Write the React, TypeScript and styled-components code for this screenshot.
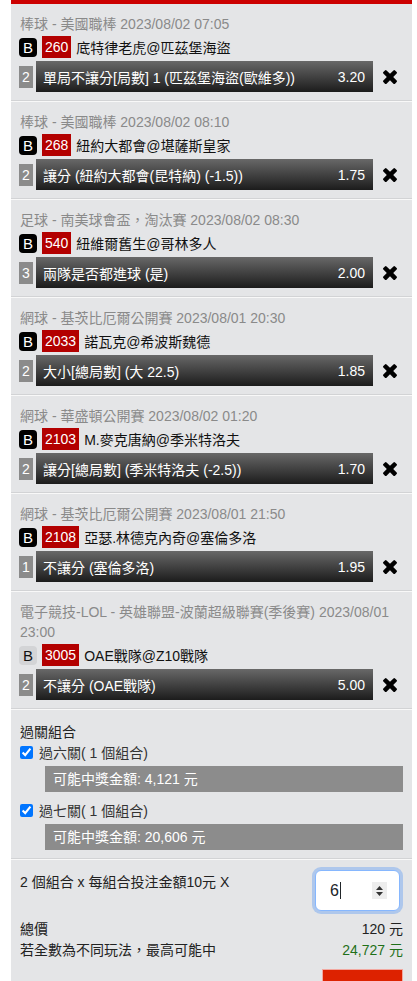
import styled, { createGlobalStyle } from 'styled-components'
import { JSX } from 'react'

// --- Global ---

const GlobalStyle = createGlobalStyle`
  body {
    margin: 0;
    background: #ffffff;
    font-family: 'Liberation Sans', 'Noto Sans CJK TC', sans-serif;
    font-size: 14px;
    color: #222;
  }
`

// --- Styled Components ---

const Slip = styled.div`
  margin-left: 11px;
  width: 401px;
  background-color: #e4e5e7;
  border-top: 4px solid #cc0000;
`

const BetItem = styled.div`
  padding: 10px 9px 8px 8px;
  border-bottom: 1px solid #d2d3d5;

  & + & {
    border-top: 1px solid #f8f8f8;
  }
`

const MatchTitle = styled.div`
  padding-left: 1px;
  color: #8a8a8a;
  line-height: 20px;
`

const MatchRow = styled.div`
  display: flex;
  align-items: center;
  gap: 5px;
  height: 22px;
  margin-top: 2px;
`

const TypeBadge = styled.span<{ $light?: boolean }>`
  display: flex;
  align-items: center;
  justify-content: center;
  width: 18px;
  height: 19px;
  border-radius: 4px;
  font-size: 15px;
  background-color: ${(p) => (p.$light ? '#d3d4d6' : '#000')};
  color: ${(p) => (p.$light ? '#111' : '#fff')};
`

const EventNo = styled.span`
  height: 22px;
  line-height: 22px;
  padding: 0 3px;
  background-color: #b30000;
  color: #fff;
`

const TeamName = styled.span`
  color: #111;
`

const BetRow = styled.div`
  display: flex;
  align-items: center;
  margin-top: 3px;
`

const LegNo = styled.span`
  display: flex;
  align-items: center;
  justify-content: center;
  width: 14px;
  height: 22px;
  background-color: #8b8b8b;
  color: #fff;
`

const BetBar = styled.div`
  display: flex;
  align-items: center;
  justify-content: space-between;
  margin-left: 3px;
  width: 337px;
  height: 31px;
  box-sizing: border-box;
  padding: 0 8px 0 7px;
  background: linear-gradient(#686868, #1c1c1c);
  color: #fff;
`

const RemoveButton = styled.button`
  display: flex;
  align-items: center;
  justify-content: center;
  margin-left: 10px;
  padding: 0;
  width: 14px;
  height: 22px;
  border: none;
  background: none;
  color: #000;
  cursor: pointer;
`

const ComboSection = styled.div`
  padding: 12px 9px 8px 9px;
  border-top: 1px solid #f8f8f8;
  border-bottom: 1px solid #d2d3d5;
`

const SectionTitle = styled.div`
  line-height: 20px;
  color: #222;
`

const ComboRow = styled.label<{ $first?: boolean }>`
  display: flex;
  align-items: center;
  gap: 6px;
  height: 20px;
  margin-top: ${(p) => (p.$first ? '0' : '8px')};
  color: #333;
`

const Check = styled.input`
  margin: 0;
  width: 13px;
  height: 13px;
  accent-color: #0075ff;
`

const PayoutBox = styled.div`
  margin: 4px 0 0 25px;
  height: 26px;
  line-height: 26px;
  padding-left: 8px;
  background-color: #8c8c8c;
  color: #fff;
`

const SummarySection = styled.div`
  padding: 9px 9px 0 9px;
  border-top: 1px solid #f8f8f8;
`

const StakeRow = styled.div`
  display: flex;
  justify-content: space-between;
  align-items: flex-start;
`

const StakeText = styled.div`
  margin-top: 3px;
  line-height: 20px;
  color: #222;
`

const InputBox = styled.div`
  display: flex;
  align-items: center;
  justify-content: space-between;
  box-sizing: border-box;
  width: 85px;
  height: 41px;
  margin: 1px 3px 0 0;
  padding: 0 12px 0 14px;
  background: #fff;
  border: 1px solid #86b7fe;
  border-radius: 6px;
  box-shadow: 0 0 0 3px rgba(13, 110, 253, 0.25);
`

const InputValue = styled.span`
  display: flex;
  align-items: center;
  font-size: 16px;
  color: #212529;
`

const Caret = styled.span`
  display: inline-block;
  width: 1px;
  height: 17px;
  margin-left: 1px;
  background: #212529;
`

const Spinner = styled.span`
  display: flex;
  align-items: center;
  justify-content: center;
  width: 15px;
  height: 17px;
  background: #ededed;
`

const TotalRow = styled.div<{ $first?: boolean }>`
  display: flex;
  justify-content: space-between;
  line-height: 21px;
  margin-top: ${(p) => (p.$first ? '8px' : '0')};
  color: #222;
`

const Amount = styled.span<{ $green?: boolean }>`
  color: ${(p) => (p.$green ? '#1f7019' : '#222')};
`

const SubmitRow = styled.div`
  display: flex;
  justify-content: flex-end;
  margin-top: 8px;
  padding-bottom: 8px;
`

const SubmitButton = styled.button`
  width: 81px;
  height: 30px;
  border: 1px solid #f2a8a0;
  background-color: #dd2200;
  color: #fff;
`

// --- Data ---

interface Bet {
  title: string
  light?: boolean
  no: string
  teams: string
  leg: number
  pick: string
  odds: string
}

const bets: Bet[] = [
  {
    title: '棒球 - 美國職棒 2023/08/02 07:05',
    no: '260',
    teams: '底特律老虎@匹茲堡海盜',
    leg: 2,
    pick: '單局不讓分[局數] 1 (匹茲堡海盜(歐維多))',
    odds: '3.20'
  },
  {
    title: '棒球 - 美國職棒 2023/08/02 08:10',
    no: '268',
    teams: '紐約大都會@堪薩斯皇家',
    leg: 2,
    pick: '讓分 (紐約大都會(昆特納) (-1.5))',
    odds: '1.75'
  },
  {
    title: '足球 - 南美球會盃，淘汰賽 2023/08/02 08:30',
    no: '540',
    teams: '紐維爾舊生@哥林多人',
    leg: 3,
    pick: '兩隊是否都進球 (是)',
    odds: '2.00'
  },
  {
    title: '網球 - 基茨比厄爾公開賽 2023/08/01 20:30',
    no: '2033',
    teams: '諾瓦克@希波斯魏德',
    leg: 2,
    pick: '大小[總局數] (大 22.5)',
    odds: '1.85'
  },
  {
    title: '網球 - 華盛頓公開賽 2023/08/02 01:20',
    no: '2103',
    teams: 'M.麥克唐納@季米特洛夫',
    leg: 2,
    pick: '讓分[總局數] (季米特洛夫 (-2.5))',
    odds: '1.70'
  },
  {
    title: '網球 - 基茨比厄爾公開賽 2023/08/01 21:50',
    no: '2108',
    teams: '亞瑟.林德克內奇@塞倫多洛',
    leg: 1,
    pick: '不讓分 (塞倫多洛)',
    odds: '1.95'
  },
  {
    title: '電子競技-LOL - 英雄聯盟-波蘭超級聯賽(季後賽) 2023/08/01 23:00',
    light: true,
    no: '3005',
    teams: 'OAE戰隊@Z10戰隊',
    leg: 2,
    pick: '不讓分 (OAE戰隊)',
    odds: '5.00'
  }
]

const combos = [
  { label: '過六關( 1 個組合)', payout: '可能中獎金額: 4,121 元' },
  { label: '過七關( 1 個組合)', payout: '可能中獎金額: 20,606 元' }
]

// --- Icons ---

const RemoveIcon = (): JSX.Element => (
  <svg width="14" height="14" viewBox="110 362 1188 1192">
    <path
      fill="currentColor"
      d="M1298 1322q0 40-28 68l-136 136q-28 28-68 28t-68-28l-294-294-294 294q-28 28-68 28t-68-28l-136-136q-28-28-28-68t28-68l294-294-294-294q-28-28-28-68t28-68l136-136q28-28 68-28t68 28l294 294 294-294q28-28 68-28t68 28l136 136q28 28 28 68t-28 68l-294 294 294 294q28 28 28 68z"
    />
  </svg>
)

const SpinIcon = (): JSX.Element => (
  <svg width="9" height="12" viewBox="0 0 9 12">
    <path d="M4.5 1 L8 5 L1 5 Z" fill="#333" />
    <path d="M4.5 11 L8 7 L1 7 Z" fill="#333" />
  </svg>
)

// --- Logic ---

export default function App(): JSX.Element {
  return (
    <>
      <GlobalStyle />
      <Slip>
        {bets.map((b) => (
          <BetItem key={b.no}>
            <MatchTitle>{b.title}</MatchTitle>
            <MatchRow>
              <TypeBadge $light={b.light}>B</TypeBadge>
              <EventNo>{b.no}</EventNo>
              <TeamName>{b.teams}</TeamName>
            </MatchRow>
            <BetRow>
              <LegNo>{b.leg}</LegNo>
              <BetBar>
                <span>{b.pick}</span>
                <span>{b.odds}</span>
              </BetBar>
              <RemoveButton aria-label="remove">
                <RemoveIcon />
              </RemoveButton>
            </BetRow>
          </BetItem>
        ))}

        <ComboSection>
          <SectionTitle>過關組合</SectionTitle>
          {combos.map((c, i) => (
            <div key={c.label}>
              <ComboRow $first={i === 0}>
                <Check type="checkbox" defaultChecked />
                {c.label}
              </ComboRow>
              <PayoutBox>{c.payout}</PayoutBox>
            </div>
          ))}
        </ComboSection>

        <SummarySection>
          <StakeRow>
            <StakeText>2 個組合 x 每組合投注金額10元 X</StakeText>
            <InputBox>
              <InputValue>
                6<Caret />
              </InputValue>
              <Spinner>
                <SpinIcon />
              </Spinner>
            </InputBox>
          </StakeRow>
          <TotalRow $first>
            <span>總價</span>
            <Amount>120 元</Amount>
          </TotalRow>
          <TotalRow>
            <span>若全數為不同玩法，最高可能中</span>
            <Amount $green>24,727 元</Amount>
          </TotalRow>
          <SubmitRow>
            <SubmitButton />
          </SubmitRow>
        </SummarySection>
      </Slip>
    </>
  )
}
